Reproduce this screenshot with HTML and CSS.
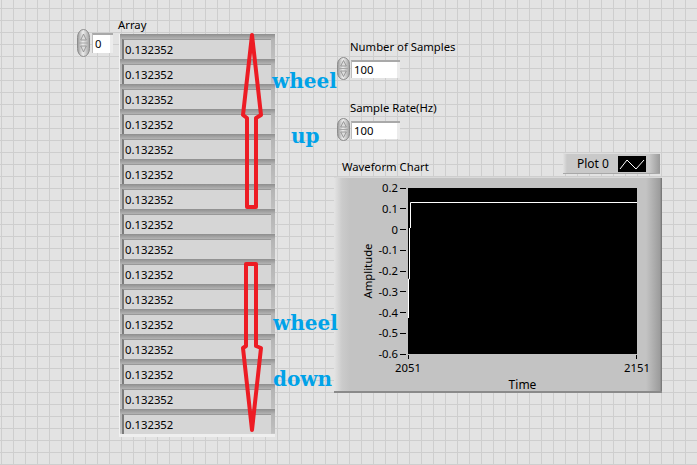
FILE: index.html
```html
<!DOCTYPE html>
<html>
<head>
<meta charset="utf-8">
<link rel="stylesheet" href="styles.css">
</head>
<body>
<div class="panel">

  <div class="ctl index-ctl">
    <svg class="spin" width="13" height="28" viewBox="0 0 13 28">
      <defs><linearGradient id="sg0" x1="0" x2="1"><stop offset="0" stop-color="#9a9a9a"/><stop offset=".45" stop-color="#ededed"/><stop offset="1" stop-color="#a2a2a2"/></linearGradient></defs>
      <rect x=".5" y=".5" width="12" height="27" rx="6" ry="8" fill="url(#sg0)" stroke="#8c8c8c"/>
      <line x1="2" y1="14" x2="11" y2="14" stroke="#a6a6a6"/>
      <path d="M6.5 5 L9.3 11 L3.7 11 Z" fill="#dcdcdc" stroke="#8a8a8a" stroke-width=".8"/>
      <path d="M6.5 23 L9.3 17 L3.7 17 Z" fill="#dcdcdc" stroke="#8a8a8a" stroke-width=".8"/>
    </svg>
    <div class="nbox index-box">0</div>
  </div>

  <div class="label array-label">Array</div>
  <div class="array">
    <div class="cell"><div class="cell-box">0.132352</div></div>
    <div class="cell"><div class="cell-box">0.132352</div></div>
    <div class="cell"><div class="cell-box">0.132352</div></div>
    <div class="cell"><div class="cell-box">0.132352</div></div>
    <div class="cell"><div class="cell-box">0.132352</div></div>
    <div class="cell"><div class="cell-box">0.132352</div></div>
    <div class="cell"><div class="cell-box">0.132352</div></div>
    <div class="cell"><div class="cell-box">0.132352</div></div>
    <div class="cell"><div class="cell-box">0.132352</div></div>
    <div class="cell"><div class="cell-box">0.132352</div></div>
    <div class="cell"><div class="cell-box">0.132352</div></div>
    <div class="cell"><div class="cell-box">0.132352</div></div>
    <div class="cell"><div class="cell-box">0.132352</div></div>
    <div class="cell"><div class="cell-box">0.132352</div></div>
    <div class="cell"><div class="cell-box">0.132352</div></div>
    <div class="cell"><div class="cell-box">0.132352</div></div>
  </div>

  <div class="numctl samples">
    <div class="label">Number of Samples</div>
    <div class="num-row">
      <svg class="spin" width="13" height="23" viewBox="0 0 13 23">
        <defs><linearGradient id="sg1" x1="0" x2="1"><stop offset="0" stop-color="#9a9a9a"/><stop offset=".45" stop-color="#ededed"/><stop offset="1" stop-color="#a2a2a2"/></linearGradient></defs>
        <rect x=".5" y=".5" width="12" height="22" rx="6" ry="7" fill="url(#sg1)" stroke="#8c8c8c"/>
        <line x1="2" y1="11.5" x2="11" y2="11.5" stroke="#a6a6a6"/>
        <path d="M6.5 3.5 L9.3 9 L3.7 9 Z" fill="#dcdcdc" stroke="#8a8a8a" stroke-width=".8"/>
        <path d="M6.5 19.5 L9.3 14 L3.7 14 Z" fill="#dcdcdc" stroke="#8a8a8a" stroke-width=".8"/>
      </svg>
      <div class="nbox">100</div>
    </div>
  </div>

  <div class="numctl rate">
    <div class="label">Sample Rate(Hz)</div>
    <div class="num-row">
      <svg class="spin" width="13" height="23" viewBox="0 0 13 23">
        <defs><linearGradient id="sg2" x1="0" x2="1"><stop offset="0" stop-color="#9a9a9a"/><stop offset=".45" stop-color="#ededed"/><stop offset="1" stop-color="#a2a2a2"/></linearGradient></defs>
        <rect x=".5" y=".5" width="12" height="22" rx="6" ry="7" fill="url(#sg2)" stroke="#8c8c8c"/>
        <line x1="2" y1="11.5" x2="11" y2="11.5" stroke="#a6a6a6"/>
        <path d="M6.5 3.5 L9.3 9 L3.7 9 Z" fill="#dcdcdc" stroke="#8a8a8a" stroke-width=".8"/>
        <path d="M6.5 19.5 L9.3 14 L3.7 14 Z" fill="#dcdcdc" stroke="#8a8a8a" stroke-width=".8"/>
      </svg>
      <div class="nbox">100</div>
    </div>
  </div>

  <div class="label chart-label">Waveform Chart</div>

  <div class="legend">
    <span class="legend-name">Plot 0</span>
    <svg class="legend-swatch" width="28" height="16" viewBox="0 0 28 16">
      <rect width="28" height="16" fill="#000"/>
      <polyline points="2,13 9,4 18,13 26,4" fill="none" stroke="#fff" stroke-width="1"/>
    </svg>
  </div>

  <div class="chart">
    <div class="ytitle"><span>Amplitude</span></div>
    <div class="yscale">
      <div class="ytick">0.2</div>
      <div class="ytick">0.1</div>
      <div class="ytick">0</div>
      <div class="ytick">-0.1</div>
      <div class="ytick">-0.2</div>
      <div class="ytick">-0.3</div>
      <div class="ytick">-0.4</div>
      <div class="ytick">-0.5</div>
      <div class="ytick">-0.6</div>
    </div>
    <div class="plot">
      <svg width="229" height="166" viewBox="0 0 229 166">
        <polyline points="2.5,40 2.5,14.5 229,14.5" fill="none" stroke="#fff" stroke-width="1"/>
        <polyline points="1.5,40 1.5,91 0.5,91 0.5,130" fill="none" stroke="#fff" stroke-width="1"/>
      </svg>
    </div>
    <div class="xscale">
      <div class="xticks"></div>
      <div class="xlabels"><span>2051</span><span>2151</span></div>
      <div class="xtitle">Time</div>
    </div>
  </div>

  <svg class="marks" width="697" height="465" viewBox="0 0 697 465">
    <polygon points="252,35 261,115 256,118 256,207 247,207 247,118 243,115" fill="none" stroke="#ed1c24" stroke-width="4" stroke-linejoin="round"/>
    <polygon points="246,264 256,264 256,346 261,348 252,430 243,348 246,346" fill="none" stroke="#ed1c24" stroke-width="4" stroke-linejoin="round"/>
  </svg>

  <div class="note note-wheel-up">wheel</div>
  <div class="note note-up">up</div>
  <div class="note note-wheel-down">wheel</div>
  <div class="note note-down">down</div>
</div>
</body>
</html>
```

FILE: styles.css
```css
html {
  background-color: #e3e3e3;
  background-image:
    linear-gradient(to right, #cecece 1px, transparent 1px),
    linear-gradient(to bottom, #cecece 1px, transparent 1px);
  background-size: 12px 12px;
  background-position: 1px 8px;
}

body {
  margin: 0;
  width: 697px;
  height: 465px;
  overflow: hidden;
  font-family: "Noto Sans", "Open Sans", sans-serif;
  font-size: 11.3px;
  color: #000;
}

.panel {
  position: relative;
  width: 697px;
  height: 465px;
}

.label {
  line-height: 14px;
  white-space: nowrap;
}

/* ---------- index control ---------- */
.ctl {
  position: absolute;
  display: flex;
  align-items: center;
  gap: 2px;
}

.index-ctl {
  left: 77px;
  top: 29px;
}

.spin {
  display: block;
  flex: none;
}

.nbox {
  box-sizing: border-box;
  width: 49px;
  height: 18px;
  background: #fff;
  border-top: 2px solid #a9a9a9;
  border-left: 1px solid #bdbdbd;
  box-shadow: inset -3px 0 0 #ececec;
  padding-left: 2px;
  line-height: 16px;
}

.index-box {
  width: 21px;
  height: 20px;
  line-height: 18px;
}

/* ---------- array ---------- */
.array-label {
  position: absolute;
  left: 118px;
  top: 18px;
}

.array {
  position: absolute;
  left: 119px;
  top: 34px;
  width: 155px;
  border-left: 1px solid #f2f2f2;
  border-bottom: 3px solid #efefef;
  display: flex;
  flex-direction: column;
}

.cell {
  box-sizing: border-box;
  height: 25px;
  padding: 5px 4px 0 2px;
  background: linear-gradient(to bottom, #8e8e8e 0, #b4b4b4 5px, #c0c0c0 24px, #cdcdcd 25px);
}

.cell-box {
  box-sizing: border-box;
  height: 20px;
  background: #d6d6d6;
  border-left: 2px solid #7b7b7b;
  border-top: 1px solid #999;
  padding-left: 1px;
  line-height: 19px;
}

/* ---------- numeric controls ---------- */
.numctl {
  position: absolute;
  display: flex;
  flex-direction: column;
  gap: 3px;
}

.samples {
  left: 350px;
  top: 40px;
}

.rate {
  left: 350px;
  top: 101px;
}

.num-row {
  display: flex;
  align-items: center;
  margin-left: -13px;
  gap: 1px;
}

/* ---------- chart ---------- */
.chart-label {
  position: absolute;
  left: 342px;
  top: 160px;
}

.legend {
  position: absolute;
  left: 563px;
  top: 153px;
  width: 97px;
  height: 21px;
  box-sizing: border-box;
  display: flex;
  align-items: center;
  padding: 0 14px 0 14px;
  background: linear-gradient(to right, #e2e2e2 0, #c9c9c9 4px, #c9c9c9 86px, #9a9a9a 97px);
  border-top: 1px solid #dedede;
  border-bottom: 1px solid #a8a8a8;
}

.legend-name {
  font-size: 12px;
  line-height: 14px;
}

.legend-swatch {
  display: block;
  margin-left: auto;
}

.chart {
  position: absolute;
  left: 334px;
  top: 177px;
  width: 328px;
  height: 216px;
  box-sizing: border-box;
  display: grid;
  grid-template-columns: 26px 16px 32px 229px 1fr;
  grid-template-rows: 10px 166px 1fr;
  background: linear-gradient(to right, #e4e4e4 0, #cbcbcb 8px, #c3c3c3 16px, #c3c3c3 312px, #9c9c9c 326px, #6e6e6e 328px);
  border-top: 1px solid #d9d9d9;
  border-bottom: 2px solid #8a8a8a;
}

.ytitle {
  grid-column: 2;
  grid-row: 2;
  display: flex;
  align-items: center;
  justify-content: center;
  position: relative;
}

.ytitle span {
  display: block;
  transform: rotate(-90deg);
  white-space: nowrap;
  line-height: 14px;
}

.yscale {
  grid-column: 3;
  grid-row: 2;
  margin: -7px 0;
  display: flex;
  flex-direction: column;
  justify-content: space-between;
  align-items: flex-end;
}

.ytick {
  display: flex;
  align-items: center;
  line-height: 14px;
  height: 14px;
}

.ytick::after {
  content: "";
  display: block;
  width: 6px;
  height: 1px;
  background: #000;
  margin-left: 2px;
  margin-right: 2px;
}

.plot {
  grid-column: 4;
  grid-row: 2;
  background: #000;
  box-sizing: border-box;
}

.plot svg {
  display: block;
}

.xscale {
  grid-column: 4;
  grid-row: 3;
  display: flex;
  flex-direction: column;
}

.xticks {
  height: 4px;
  margin-top: 1px;
  border-left: 1px solid #000;
  border-right: 1px solid #000;
}

.xlabels {
  display: flex;
  justify-content: space-between;
  margin: 2px -14px 0 -14px;
  line-height: 14px;
}

.xlabels span {
  width: 28px;
  text-align: center;
}

.xtitle {
  text-align: center;
  line-height: 14px;
  margin-top: 3px;
  font-size: 12px;
}

/* ---------- annotations ---------- */
.marks {
  position: absolute;
  left: 0;
  top: 0;
  pointer-events: none;
}

.note {
  position: absolute;
  font-family: "DejaVu Serif", serif;
  font-weight: bold;
  font-size: 20px;
  line-height: 20px;
  color: #00a2e8;
  white-space: nowrap;
}

.note-wheel-up { left: 272px; top: 71px; }
.note-up { left: 291px; top: 126px; }
.note-wheel-down { left: 273px; top: 313px; }
.note-down { left: 273px; top: 369px; }
```
